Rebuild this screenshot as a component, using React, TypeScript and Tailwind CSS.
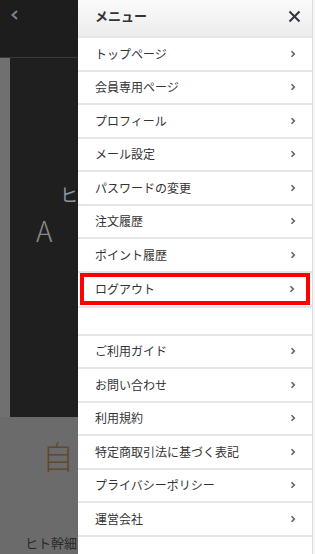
import React from "react";

const mainItems = [
  "トップページ",
  "会員専用ページ",
  "プロフィール",
  "メール設定",
  "パスワードの変更",
  "注文履歴",
  "ポイント履歴",
];

const infoItems = [
  "ご利用ガイド",
  "お問い合わせ",
  "利用規約",
  "特定商取引法に基づく表記",
  "プライバシーポリシー",
  "運営会社",
];

const Chevron = () => (
  <svg width="6" height="8" viewBox="0 0 6 8" className="shrink-0">
    <polyline points="1.5,1.2 4.3,4 1.5,6.8" fill="none" stroke="#5a6270" strokeWidth="1.6" />
  </svg>
);

const MenuRow = ({ label }: { label: string }) => (
  <div className="flex h-[33.5px] items-center justify-between border-b-2 border-[#e6e6e6] pl-[17px] pr-[16px]">
    <span className="text-[12px] text-[#333]">{label}</span>
    <Chevron />
  </div>
);

const App = () => {
  return (
    <div
      className="relative h-[554px] w-[315px] overflow-hidden bg-[#6b6b6b]"
      style={{ fontFamily: '"Noto Sans CJK JP", "Noto Sans", sans-serif' }}
    >
      {/* page behind the drawer */}
      <div className="flex h-[58px] items-start border-b border-[#3a3a3a] bg-[#1d1d1d] pl-[10px] pt-[10px]">
        <svg width="9" height="10" viewBox="0 0 9 10">
          <polyline points="7,1 2.5,5 7,9" fill="none" stroke="#7a8290" strokeWidth="2" />
        </svg>
      </div>
      <div className="flex h-[359px]">
        <div className="w-[10px] bg-[#707070]" />
        <div className="flex-1 bg-[#1f1f1f] pt-[126px]">
          <div className="pl-[50px] text-[18px] leading-[20px] text-[#8a98a8]">ヒ</div>
          <div className="pl-[26px] pt-[12px] text-[28px] font-light leading-[28px] text-[#8a8a8a]">A</div>
        </div>
      </div>
      <div className="pl-[42px] pt-[20px] text-[32px] font-light leading-[36px] text-[#5e4a2c]">自</div>
      <div className="pl-[25px] pt-[60px] text-[13px] text-[#2a2a2a]">ヒト幹細</div>

      {/* drawer menu */}
      <div className="absolute top-0 right-0 bottom-0 flex w-[237px] bg-white">
        <div className="flex w-[234px] flex-col">
          <div className="flex h-[38px] items-center justify-between border-b-2 border-[#e6e6e6] bg-linear-to-b from-[#fbfbfb] to-[#ececec] pb-[4px] pl-[17px] pr-[11px]">
            <span className="text-[13px] font-bold text-[#333]">メニュー</span>
            <svg width="13" height="13" viewBox="0 0 13 13">
              <path d="M1.5 1.5 L11.5 11.5 M11.5 1.5 L1.5 11.5" stroke="#2f3640" strokeWidth="2" />
            </svg>
          </div>
          {mainItems.map((l) => (
            <MenuRow key={l} label={l} />
          ))}
          <div className="h-[35px] border-b-2 border-[#e6e6e6]">
            <div className="mx-[2px] flex h-[32px] items-center justify-between border-4 border-[#ff0000] pl-[11px] pr-[11px]">
              <span className="text-[12px] text-[#333]">ログアウト</span>
              <Chevron />
            </div>
          </div>
          <div className="h-[28px] border-b-2 border-[#e6e6e6]" />
          {infoItems.map((l) => (
            <MenuRow key={l} label={l} />
          ))}
        </div>
        <div className="w-[3px] border-l border-[#dcdcdc] bg-[#f6f6f6]" />
      </div>
    </div>
  );
};

export default App;
